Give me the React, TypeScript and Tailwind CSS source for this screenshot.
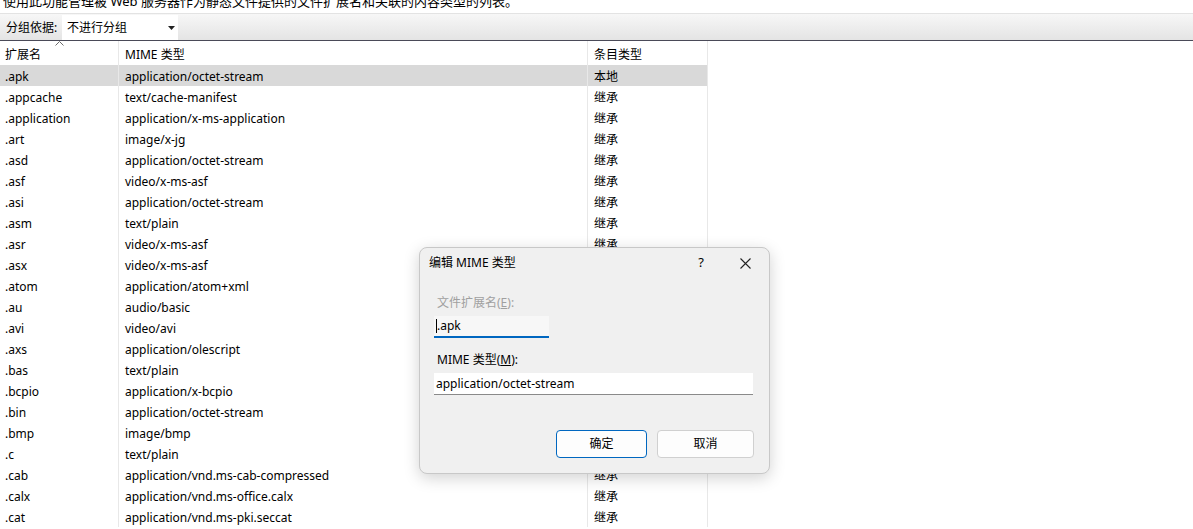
import React from 'react';

type MimeRow = { ext: string; mime: string; kind: string };

const rows: MimeRow[] = [
  { ext: '.apk', mime: 'application/octet-stream', kind: '本地' },
  { ext: '.appcache', mime: 'text/cache-manifest', kind: '继承' },
  { ext: '.application', mime: 'application/x-ms-application', kind: '继承' },
  { ext: '.art', mime: 'image/x-jg', kind: '继承' },
  { ext: '.asd', mime: 'application/octet-stream', kind: '继承' },
  { ext: '.asf', mime: 'video/x-ms-asf', kind: '继承' },
  { ext: '.asi', mime: 'application/octet-stream', kind: '继承' },
  { ext: '.asm', mime: 'text/plain', kind: '继承' },
  { ext: '.asr', mime: 'video/x-ms-asf', kind: '继承' },
  { ext: '.asx', mime: 'video/x-ms-asf', kind: '继承' },
  { ext: '.atom', mime: 'application/atom+xml', kind: '继承' },
  { ext: '.au', mime: 'audio/basic', kind: '继承' },
  { ext: '.avi', mime: 'video/avi', kind: '继承' },
  { ext: '.axs', mime: 'application/olescript', kind: '继承' },
  { ext: '.bas', mime: 'text/plain', kind: '继承' },
  { ext: '.bcpio', mime: 'application/x-bcpio', kind: '继承' },
  { ext: '.bin', mime: 'application/octet-stream', kind: '继承' },
  { ext: '.bmp', mime: 'image/bmp', kind: '继承' },
  { ext: '.c', mime: 'text/plain', kind: '继承' },
  { ext: '.cab', mime: 'application/vnd.ms-cab-compressed', kind: '继承' },
  { ext: '.calx', mime: 'application/vnd.ms-office.calx', kind: '继承' },
  { ext: '.cat', mime: 'application/vnd.ms-pki.seccat', kind: '继承' },
];

const font = { fontFamily: '"Noto Sans", "Noto Sans CJK SC", sans-serif' };

const EditDialog: React.FC = () => (
  <div className="absolute left-[419px] top-[247px] w-[351px] h-[227px] rounded-lg border border-[#c8c8c8] bg-[#f0f0f0] shadow-[0_4px_16px_rgba(0,0,0,0.18)] flex flex-col">
    <div className="h-[30px] flex items-center pl-[9px] pr-[16px] text-[12px] text-black">
      <span className="flex-1">编辑 MIME 类型</span>
      <span className="w-[12px] text-center mr-[33px] text-[13px]">?</span>
      <svg width="11" height="11" viewBox="0 0 11 11" className="mr-[2px]">
        <path d="M0.5 0.5 L10.5 10.5 M10.5 0.5 L0.5 10.5" stroke="#222" strokeWidth="1.1" fill="none" />
      </svg>
    </div>
    <div className="px-[14px] pt-[16px] flex flex-col text-[12px]">
      <div className="text-[#a0a0a0] h-[18px] leading-[18px] pl-[3px]">
        文件扩展名(<span className="underline">E</span>):
      </div>
      <div className="mt-[4px] w-[115px] h-[22px] bg-[#f7f7f7] border-b-2 border-[#0067c0] flex items-center pl-[2px] text-black">
        <span className="w-px h-[14px] bg-black" />
        <span>.apk</span>
      </div>
      <div className="mt-[13px] h-[18px] leading-[18px] pl-[3px] text-black">
        MIME 类型(<span className="underline">M</span>):
      </div>
      <div className="mt-[4px] w-[319px] h-[22px] bg-white border-b border-[#8a8a8a] flex items-center pl-[2px] text-black">
        application/octet-stream
      </div>
      <div className="mt-[35px] flex justify-end gap-[10px] pr-[1px]">
        <button className="w-[91px] h-[28px] rounded-[4px] border border-[#0067c0] bg-[#fdfdfd] text-[12px] text-black">确定</button>
        <button className="w-[97px] h-[28px] rounded-[4px] border border-[#d0d0d0] bg-[#fdfdfd] text-[12px] text-black">取消</button>
      </div>
    </div>
  </div>
);

export default function App() {
  return (
    <div className="relative w-[1193px] h-[529px] overflow-hidden bg-white text-black" style={font}>
      <div className="h-[14px] overflow-hidden border-b border-[#e3e3e3]">
        <div className="-mt-[8px] pl-[3px] text-[13px] leading-[18px] whitespace-nowrap">
          使用此功能管理被 Web 服务器作为静态文件提供的文件扩展名和关联的内容类型的列表。
        </div>
      </div>
      <div className="h-[27px] flex items-center pt-[3px] bg-gradient-to-b from-[#f7f7f7] to-[#e4e4e4] border-b border-[#4a4a58]">
        <span className="pl-[6px] text-[12px] w-[62px] -mt-[1px]">分组依据:</span>
        <div className="w-[116px] h-[25px] -mt-[2px] bg-white flex items-center pl-[5px] pt-[1px] text-[12px]">
          <span className="flex-1">不进行分组</span>
          <svg width="7" height="4" viewBox="0 0 7 4" className="mr-[3px]">
            <path d="M0 0 L7 0 L3.5 4 Z" fill="#222" />
          </svg>
        </div>
      </div>
      <div className="grid grid-cols-[119px_469px_120px_1fr] text-[12px]">
        <div className="relative h-[24px] flex items-center pt-[3px] pl-[5px] border-r border-[#e8e8e8]">
          扩展名
          <svg width="9" height="5" viewBox="0 0 9 5" className="absolute left-[55px] top-[0px]">
            <path d="M0.5 4.5 L4.5 0.5 L8.5 4.5" stroke="#6b6b6b" strokeWidth="1" fill="none" />
          </svg>
        </div>
        <div className="h-[24px] flex items-center pt-[3px] pl-[6px] border-r border-[#e8e8e8]">MIME 类型</div>
        <div className="h-[24px] flex items-center pt-[3px] pl-[6px] border-r border-[#e8e8e8]">条目类型</div>
        <div className="h-[24px]" />
        {rows.map((r, i) => (
          <React.Fragment key={r.ext}>
            <div className={`h-[21px] flex items-center pt-[2px] pl-[5px] border-r border-[#e8e8e8] ${i === 0 ? 'bg-[#d9d9d9]' : ''}`}>{r.ext}</div>
            <div className={`h-[21px] flex items-center pt-[2px] pl-[6px] border-r border-[#e8e8e8] ${i === 0 ? 'bg-[#d9d9d9]' : ''}`}>{r.mime}</div>
            <div className={`h-[21px] flex items-center pt-[2px] pl-[6px] border-r border-[#e8e8e8] ${i === 0 ? 'bg-[#d9d9d9]' : ''}`}>{r.kind}</div>
            <div className="h-[21px]" />
          </React.Fragment>
        ))}
      </div>
      <EditDialog />
    </div>
  );
}
